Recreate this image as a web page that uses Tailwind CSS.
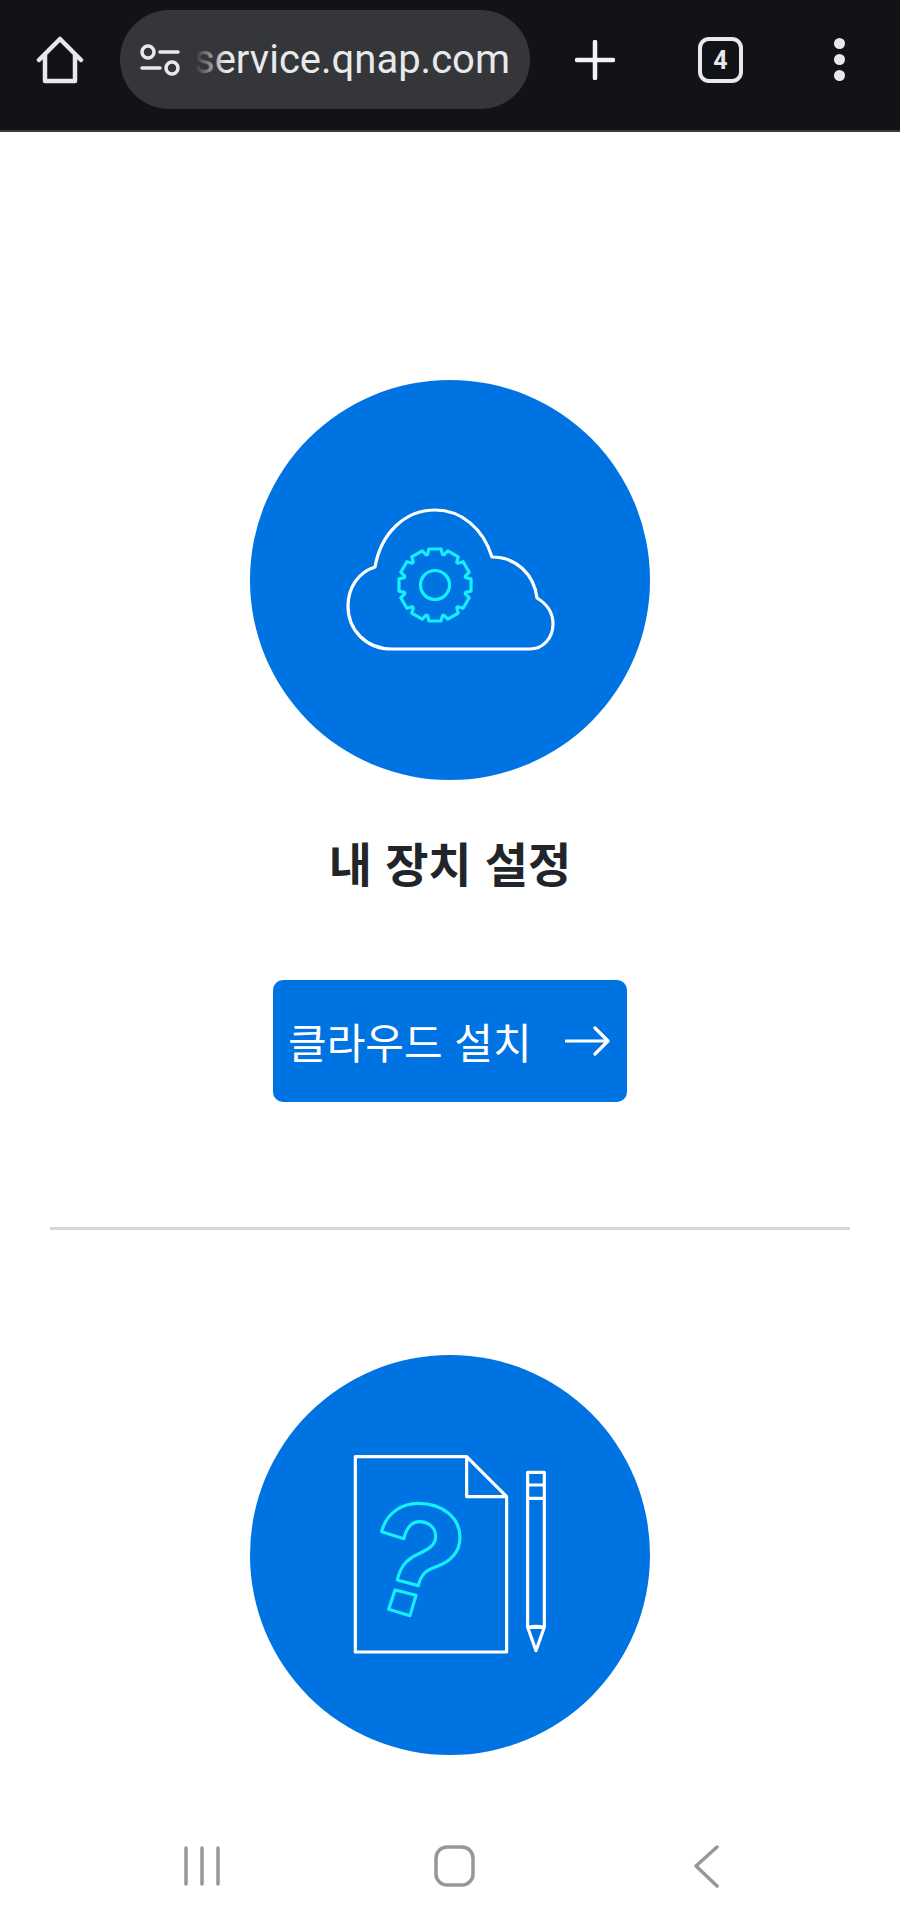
<!DOCTYPE html>
<html lang="ko">
  <head>
    <meta charset="UTF-8" />
    <meta name="viewport" content="width=device-width, initial-scale=1.0" />
    <title>내 장치 설정</title>
    <script src="https://cdn.jsdelivr.net/npm/@tailwindcss/browser@4"></script>
  </head>
  <body class="bg-white">
    <div class="w-[900px] h-[1923px] overflow-hidden flex flex-col bg-white font-['Noto_Sans_CJK_KR','Noto_Sans',sans-serif]">
      <!-- browser toolbar -->
      <header class="h-[132px] shrink-0 flex items-start bg-[#121317] border-b-2 border-[#3a3b3e]">
        <svg class="ml-[36px] mt-[36px] w-[48px] h-[48px]" viewBox="0 0 48 48" fill="none" stroke="#e8e9ea" stroke-width="4.5" stroke-linejoin="round" stroke-linecap="round">
          <path d="M3 24 L24 3 L45 24 M9 19 V45 H39 V19" />
        </svg>
        <div class="ml-[36px] mt-[10px] w-[410px] h-[99px] rounded-full bg-[#35363a] flex items-center pl-[20px]">
          <svg class="w-[40px] h-[32px] shrink-0" viewBox="0 0 40 32" fill="none" stroke="#e8e9ea" stroke-width="3.5" stroke-linecap="round">
            <circle cx="8" cy="8" r="6" />
            <path d="M20 8 H38 M2 24 H20" />
            <circle cx="32" cy="24" r="6" />
          </svg>
          <div class="relative ml-[2px] w-[328px] overflow-hidden flex justify-end">
            <span class="font-['Roboto',sans-serif] text-[40px] leading-[52px] text-[#e8e9ea] whitespace-nowrap">service.qnap.com</span>
            <div class="absolute left-0 top-0 h-full w-[44px] bg-gradient-to-r from-[#35363a] from-30% to-transparent"></div>
          </div>
        </div>
        <svg class="ml-[45px] mt-[40px] w-[40px] h-[40px]" viewBox="0 0 40 40" stroke="#f1f2f3" stroke-width="4.5" stroke-linecap="round">
          <path d="M20 2 V38 M2 20 H38" />
        </svg>
        <div class="ml-[83px] mt-[37px] w-[45px] h-[46px] rounded-[11px] border-[4px] border-[#e8e9ea] flex items-center justify-center font-['Roboto',sans-serif] font-bold text-[25px] leading-none text-[#e8e9ea]">4</div>
        <div class="ml-[91px] mt-[38px] flex flex-col gap-[5px]">
          <div class="w-[11px] h-[11px] rounded-full bg-[#e8e9ea]"></div>
          <div class="w-[11px] h-[11px] rounded-full bg-[#e8e9ea]"></div>
          <div class="w-[11px] h-[11px] rounded-full bg-[#e8e9ea]"></div>
        </div>
      </header>

      <main class="flex flex-col items-center flex-1">
        <!-- device setup -->
        <div class="mt-[248px] w-[400px] h-[400px] rounded-full bg-[#0073e2]">
          <svg class="w-[400px] h-[400px]" viewBox="250 380 400 400" fill="none" stroke-linejoin="round">
            <path stroke="#ffffff" stroke-width="3.2" d="M392 649 C366 649 348 630 348 606 C348 587 359 572 375 567 C381 533 405 510 435 510 C461 510 483 528 492 557 C516 557 534 574 537 598 C547 604 553 613 553 624 C553 638 543 649 530 649 Z" />
            <g stroke="#13f0ff" stroke-width="3.2" transform="translate(435 585)">
              <circle r="14.5" />
              <path id="tooth" d="M-8.3 -30.4 L-7.4 -30.6 L-6.1 -36 L6.1 -36 L7.4 -30.6 L8.3 -30.4" />
              <use href="#tooth" transform="rotate(30)" />
              <use href="#tooth" transform="rotate(60)" />
              <use href="#tooth" transform="rotate(90)" />
              <use href="#tooth" transform="rotate(120)" />
              <use href="#tooth" transform="rotate(150)" />
              <use href="#tooth" transform="rotate(180)" />
              <use href="#tooth" transform="rotate(210)" />
              <use href="#tooth" transform="rotate(240)" />
              <use href="#tooth" transform="rotate(270)" />
              <use href="#tooth" transform="rotate(300)" />
              <use href="#tooth" transform="rotate(330)" />
            </g>
          </svg>
        </div>
        <h2 class="mt-[46px] text-[47px] leading-[72px] font-bold text-[#212529] whitespace-nowrap">내 장치 설정</h2>
        <a class="mt-[82px] w-[354px] h-[122px] rounded-[10px] bg-[#0073e2] flex items-center pl-[15px] text-white">
          <span class="text-[42px] leading-none whitespace-nowrap">클라우드 설치</span>
          <svg class="ml-auto mr-[17px] w-[45px] h-[30px]" viewBox="0 0 45 30" fill="none" stroke="#ffffff" stroke-width="3.2" stroke-linecap="round" stroke-linejoin="round">
            <path d="M1 15 H43 M30 2 L43 15 L30 28" />
          </svg>
        </a>

        <div class="mt-[125px] w-[800px] h-[3px] bg-[#d6d6d6]"></div>

        <!-- help doc -->
        <div class="mt-[125px] w-[400px] h-[400px] rounded-full bg-[#0073e2]">
          <svg class="w-[400px] h-[400px]" viewBox="250 1355 400 400" fill="none" stroke-linejoin="round" stroke-linecap="round">
            <g transform="translate(340 1440) scale(0.3333)" stroke-width="9.5">
              <path stroke="#ffffff" d="M46 50 H380 L500 170 V636 H46 Z M380 50 V170 H500" />
              <path stroke="#ffffff" d="M563 97 H613 V562 H563 Z M563 135 H613 M563 175 H613 M563 562 Q588 556 613 562 L588 632 Z" />
              <path stroke="#13f0ff" d="M125 275 C140 215 190 190 235 190 C310 190 360 235 360 292 C360 340 325 368 285 382 C255 392 243 405 235 437 L172 420 C180 385 195 360 235 342 C265 328 287 315 287 290 C287 262 265 245 238 245 C215 245 198 265 192 296 Z" />
              <path stroke="#13f0ff" d="M165 450 L228 466 L210 527 L146 508 Z" />
            </g>
          </svg>
        </div>
      </main>

      <!-- android nav bar -->
      <footer class="h-[123px] shrink-0 relative">
        <svg class="absolute left-[180px] top-[44px] w-[550px] h-[44px]" viewBox="180 1844 550 44" fill="none" stroke="#979797" stroke-width="3.5" stroke-linecap="round" stroke-linejoin="round">
          <path d="M186 1848 V1884 M202 1848 V1884 M218 1848 V1884" />
          <rect x="436" y="1847" width="37" height="38" rx="11" />
          <path d="M717 1847 L696 1866 L717 1886" />
        </svg>
      </footer>
    </div>
  </body>
</html>
